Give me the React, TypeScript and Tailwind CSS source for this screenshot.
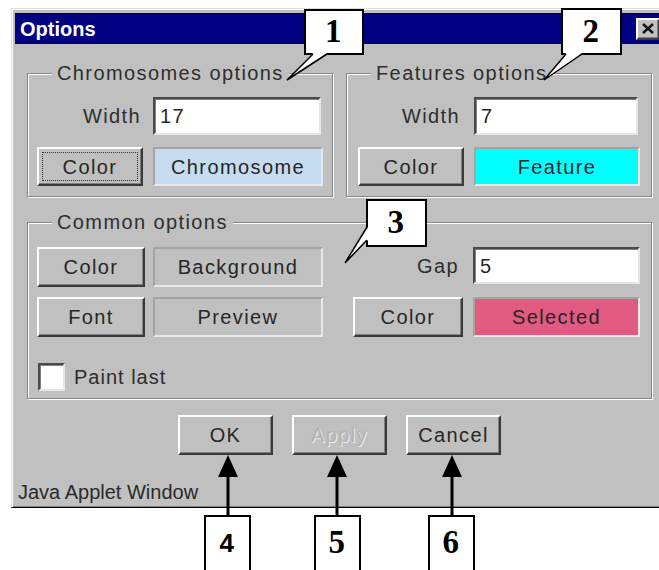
import React from 'react';

const raised =
  'border-2 border-t-white border-l-white border-r-[#3a3a3a] border-b-[#3a3a3a] shadow-[inset_-1px_-1px_0_#808080]';
const sunken =
  'border-2 border-t-[#4a4a4a] border-l-[#4a4a4a] border-r-[#e6e6e6] border-b-[#e6e6e6] shadow-[inset_1px_1px_0_#808080]';
const panel =
  'border-2 border-t-[#a4a4a4] border-l-[#a4a4a4] border-r-[#e8e8e8] border-b-[#e8e8e8]';
const etched =
  'border border-[#868686] shadow-[inset_1px_1px_0_#fff,1px_1px_0_#fff]';

function Btn({ label, focus = false, disabled = false, className = '' }: { label: string; focus?: boolean; disabled?: boolean; className?: string }) {
  return (
    <button className={`${raised} bg-[#c0c0c0] flex items-center justify-center p-[3px] ${className}`}>
      <span
        className={`flex-1 self-stretch flex items-center justify-center ${
          focus ? 'border border-dotted border-[#333]' : ''
        } ${disabled ? 'text-[#b4b4b4] [text-shadow:1px_1px_0_#eee]' : 'text-[#262626]'}`}
      >
        {label}
      </span>
    </button>
  );
}

function Field({ value, className = '' }: { value: string; className?: string }) {
  return (
    <div className={`${sunken} bg-white flex items-center pl-[5px] text-[#262626] ${className}`}>{value}</div>
  );
}

function Swatch({ label, bg, className = '' }: { label: string; bg: string; className?: string }) {
  return (
    <div className={`${panel} ${bg} flex items-center justify-center text-[#262626] ${className}`}>{label}</div>
  );
}

function Group({ title, children, className = '' }: { title: string; children: React.ReactNode; className?: string }) {
  return (
    <fieldset className={`${etched} ${className}`}>
      <legend className="ml-[24px] px-[5px] bg-[#c0c0c0] leading-[24px] text-[#2e2e2e]">{title}</legend>
      {children}
    </fieldset>
  );
}

function Callout({ n, className, serif = true }: { n: string; className: string; serif?: boolean }) {
  return (
    <div
      className={`absolute border-2 border-black bg-white flex items-center justify-center font-bold text-black ${
        serif ? "font-['Liberation_Serif',serif] text-[33px]" : "font-['Liberation_Sans',sans-serif] text-[26px]"
      } ${className}`}
    >
      {n}
    </div>
  );
}

export default function App() {
  return (
    <div className="relative w-[659px] h-[570px] overflow-hidden bg-white font-['Liberation_Sans',Arial,sans-serif] text-[20px] tracking-[1.4px]">
      {/* dialog window */}
      <div className="ml-[11px] mt-[8px] w-[657px] h-[500px] flex flex-col bg-[#c0c0c0] border border-t-[#dfdfdf] border-l-[#dfdfdf] border-r-black border-b-black shadow-[inset_1px_1px_0_#fff,inset_-1px_-1px_0_#808080] px-[3px] pt-[4px]">
        <div className="h-[31px] bg-[#000080] flex items-center justify-between pl-[5px] pr-[4px]">
          <span className="text-white font-bold tracking-normal text-[20px]">Options</span>
          <div className={`${raised} bg-[#c0c0c0] w-[24px] h-[22px] flex items-center justify-center`}>
            <svg width="12" height="11" viewBox="0 0 12 11">
              <path d="M1 1 L11 10 M11 1 L1 10" stroke="#111" strokeWidth="2.4" />
            </svg>
          </div>
        </div>

        <div className="px-[12px] pt-[17px]">
          <div className="flex gap-[13px]">
            <Group title="Chromosomes options" className="flex-1">
              <div className="grid grid-cols-[106px_1fr] gap-x-[10px] gap-y-[12px] pl-[9px] pr-[9px] pt-[12px] pb-[10px]">
                <div className="flex items-center justify-end pr-[2px] text-[#2e2e2e]">Width</div>
                <Field value="17" className="h-[38px] mr-[2px]" />
                <Btn label="Color" focus className="h-[39px]" />
                <Swatch label="Chromosome" bg="bg-[#c6dcf0]" className="h-[39px]" />
              </div>
            </Group>
            <Group title="Features options" className="flex-1">
              <div className="grid grid-cols-[106px_1fr] gap-x-[10px] gap-y-[12px] pl-[11px] pr-[11px] pt-[12px] pb-[10px]">
                <div className="flex items-center justify-end pr-[4px] text-[#2e2e2e]">Width</div>
                <Field value="7" className="h-[38px] mr-[2px]" />
                <Btn label="Color" className="h-[39px]" />
                <Swatch label="Feature" bg="bg-[#00ffff]" className="h-[39px]" />
              </div>
            </Group>
          </div>

          <Group title="Common options" className="mt-[13px]">
            <div className="pl-[9px] pr-[11px] pt-[13px] pb-[6px]">
              <div className="flex">
                <div className="grid grid-cols-[108px_170px] gap-x-[8px] gap-y-[10px]">
                  <Btn label="Color" className="h-[40px]" />
                  <Swatch label="Background" bg="bg-[#c0c0c0]" className="h-[40px]" />
                  <Btn label="Font" className="h-[40px]" />
                  <Swatch label="Preview" bg="bg-[#c0c0c0]" className="h-[40px]" />
                </div>
                <div className="ml-auto grid grid-cols-[110px_167px] gap-x-[10px] gap-y-[10px] grid-rows-[40px_40px]">
                  <div className="flex items-center justify-end pr-[4px] pb-[3px] text-[#2e2e2e]">Gap</div>
                  <Field value="5" className="h-[37px]" />
                  <Btn label="Color" className="h-[40px]" />
                  <Swatch label="Selected" bg="bg-[#e05a82]" className="h-[40px]" />
                </div>
              </div>
              <div className="mt-[25px] flex items-center gap-[9px] pl-[1px]">
                <div className={`${sunken} bg-white w-[27px] h-[28px]`} />
                <span className="text-[#2e2e2e] tracking-[1px]">Paint last</span>
              </div>
            </div>
          </Group>

          <div className="mt-[16px] flex justify-center gap-[19px]">
            <Btn label="OK" className="w-[95px] h-[40px]" />
            <Btn label="Apply" disabled className="w-[95px] h-[40px]" />
            <Btn label="Cancel" className="w-[95px] h-[40px]" />
          </div>
        </div>

        <div className="mt-auto pl-[3px] pb-[3px] leading-[24px] tracking-normal text-[#2a2a2a]">Java Applet Window</div>
      </div>

      {/* annotation callouts */}
      <Callout n="1" className="left-[304px] top-[9px] w-[60px] h-[46px]" />
      <Callout n="2" className="left-[561px] top-[8px] w-[61px] h-[47px]" />
      <Callout n="3" className="left-[366px] top-[199px] w-[61px] h-[48px]" />
      <Callout n="4" serif={false} className="left-[204px] top-[515px] w-[47px] h-[62px] pb-[6px]" />
      <Callout n="5" className="left-[314px] top-[515px] w-[47px] h-[62px] pb-[6px] text-[30px]" />
      <Callout n="6" className="left-[428px] top-[515px] w-[47px] h-[62px] pb-[6px] text-[30px]" />

      <svg className="absolute inset-0 pointer-events-none" width="659" height="570" viewBox="0 0 659 570">
        <g fill="white" stroke="black" strokeWidth="1.5">
          <polygon points="313,53 327,53 287,80" stroke="none" />
          <polyline points="313,54 287,80 327,54" fill="none" />
          <polygon points="566,53 582,53 544,80" stroke="none" />
          <polyline points="566,54 544,80 582,54" fill="none" />
          <polygon points="368,227 368,240 345,263" stroke="none" />
          <polyline points="367,227 345,263 367,240" fill="none" />
        </g>
        <g fill="black">
          <rect x="226.5" y="470" width="3" height="46" />
          <polygon points="228,455 218,477 238,477" />
          <rect x="335.5" y="470" width="3" height="46" />
          <polygon points="337,455 327,477 347,477" />
          <rect x="450.5" y="470" width="3" height="46" />
          <polygon points="452,455 442,477 462,477" />
        </g>
      </svg>
    </div>
  );
}
